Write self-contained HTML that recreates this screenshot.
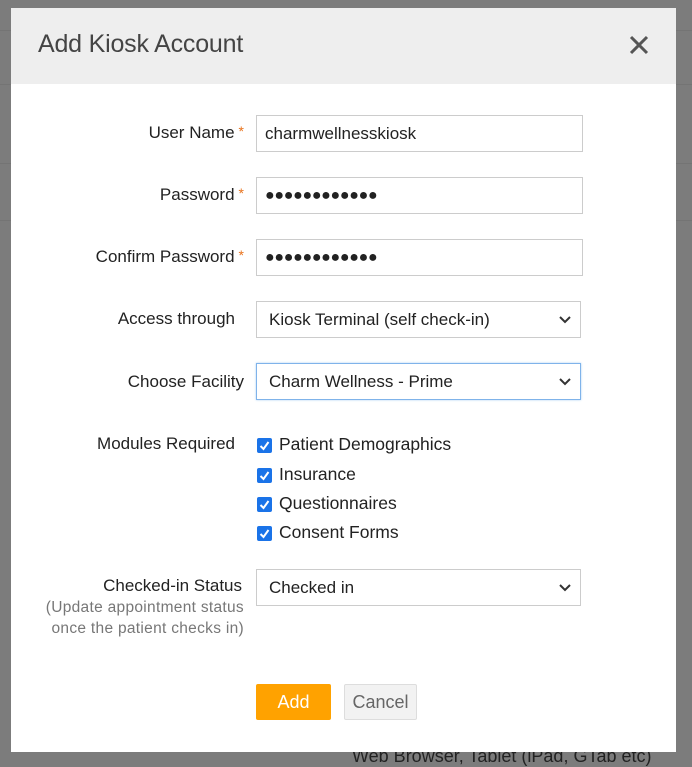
<!DOCTYPE html>
<html><head><meta charset="utf-8"><style>
*{box-sizing:border-box;margin:0;padding:0}
body{width:692px;height:762px;background:#7c7c7c;font-family:"Liberation Sans",sans-serif;position:relative;overflow:hidden;color:#222}
.bgline{position:absolute;left:0;right:0;height:1px;background:#747474}
.modal{position:absolute;left:11px;top:8px;width:665px;height:744px;background:#fff;z-index:2}
.hdr{position:absolute;left:0;top:0;width:665px;height:76px;background:#eeeeee}
.hdr h1{position:absolute;left:27px;top:22px;font-weight:normal;font-size:25px;color:#444;letter-spacing:-0.2px}
.x{position:absolute;left:618px;top:27px}
.lbl{position:absolute;right:432px;font-size:17px;color:#222;text-align:right;white-space:nowrap}
.lbl .s{color:#e8711a;font-size:14px;margin-left:4px;vertical-align:top}
.in{position:absolute;left:245px;width:327px;height:37px;border:1px solid #ccc;font-size:17px;padding:0 8px;line-height:35px;color:#222}
.sel{width:325px;padding-left:12px}
.sel svg{position:absolute;right:9px;top:14px}
.dots{font-size:16px;letter-spacing:-0.3px}
.cb{position:absolute;left:246px;width:15px;height:15px;background:#1a73e8;border-radius:2px}
.cbl{position:absolute;left:268px;font-size:17.5px;color:#222}
.sub{position:absolute;right:432px;font-size:15.5px;color:#777;text-align:right;line-height:21px;letter-spacing:0.3px}
.btn{position:absolute;top:676px;height:36px;font-size:18px;text-align:center;line-height:36px;border-radius:2px}
</style></head><body>
<div class="bgline" style="top:30px"></div>
<div class="bgline" style="top:84px"></div>
<div class="bgline" style="top:163px"></div>
<div class="bgline" style="top:220px"></div>
<div class="modal">
<div class="hdr"><h1>Add Kiosk Account</h1>
<svg class="x" width="20" height="20" viewBox="0 0 20 20"><path d="M2 2L18 18M18 2L2 18" stroke="#555" stroke-width="3"/></svg></div>

<div class="lbl" style="top:115px">User Name<span class="s">*</span></div>
<div class="in" style="top:107px">charmwellnesskiosk</div>
<div class="lbl" style="top:177px">Password<span class="s">*</span></div>
<div class="in dots" style="top:169px">●●●●●●●●●●●●</div>
<div class="lbl" style="top:239px">Confirm Password<span class="s">*</span></div>
<div class="in dots" style="top:231px">●●●●●●●●●●●●</div>
<div class="lbl" style="top:301px;right:441px">Access through</div>
<div class="in sel" style="top:293px">Kiosk Terminal (self check-in)<svg width="12" height="8" viewBox="0 0 12 8"><path d="M1 1L6 6L11 1" stroke="#333" stroke-width="2" fill="none"/></svg></div>
<div class="lbl" style="top:364px">Choose Facility</div>
<div class="in sel" style="top:355px;border-color:#7fb3ea;box-shadow:0 0 2px #a9cdf3">Charm Wellness - Prime<svg width="12" height="8" viewBox="0 0 12 8"><path d="M1 1L6 6L11 1" stroke="#333" stroke-width="2" fill="none"/></svg></div>

<div class="lbl" style="top:426px;right:441px">Modules Required</div>
<div class="cb" style="top:430px"></div><div class="cbl" style="top:426px">Patient Demographics</div>
<div class="cb" style="top:460px"></div><div class="cbl" style="top:456px">Insurance</div>
<div class="cb" style="top:489px"></div><div class="cbl" style="top:485px">Questionnaires</div>
<div class="cb" style="top:518px"></div><div class="cbl" style="top:514px">Consent Forms</div>
<svg style="position:absolute;left:246px;top:430px" width="15" height="104"><g stroke="#fff" stroke-width="2" fill="none"><path d="M3.5 8L6.5 11L11.5 4"/><path d="M3.5 38L6.5 41L11.5 34"/><path d="M3.5 67L6.5 70L11.5 63"/><path d="M3.5 96L6.5 99L11.5 92"/></g></svg>

<div class="lbl" style="top:568px;right:434px">Checked-in Status</div>
<div class="sub" style="top:589px">(Update appointment status<br>once the patient checks in)</div>
<div class="in sel" style="top:561px">Checked in<svg width="12" height="8" viewBox="0 0 12 8"><path d="M1 1L6 6L11 1" stroke="#333" stroke-width="2" fill="none"/></svg></div>

<div class="btn" style="left:245px;width:75px;background:#ffa200;color:#fff">Add</div>
<div class="btn" style="left:333px;width:73px;background:#f2f2f2;border:1px solid #ddd;color:#666;line-height:34px">Cancel</div>
</div>
<div style="position:absolute;left:352px;top:746px;font-size:18px;color:#222;z-index:1">Web Browser, Tablet (iPad, GTab etc)</div>
</body></html>
